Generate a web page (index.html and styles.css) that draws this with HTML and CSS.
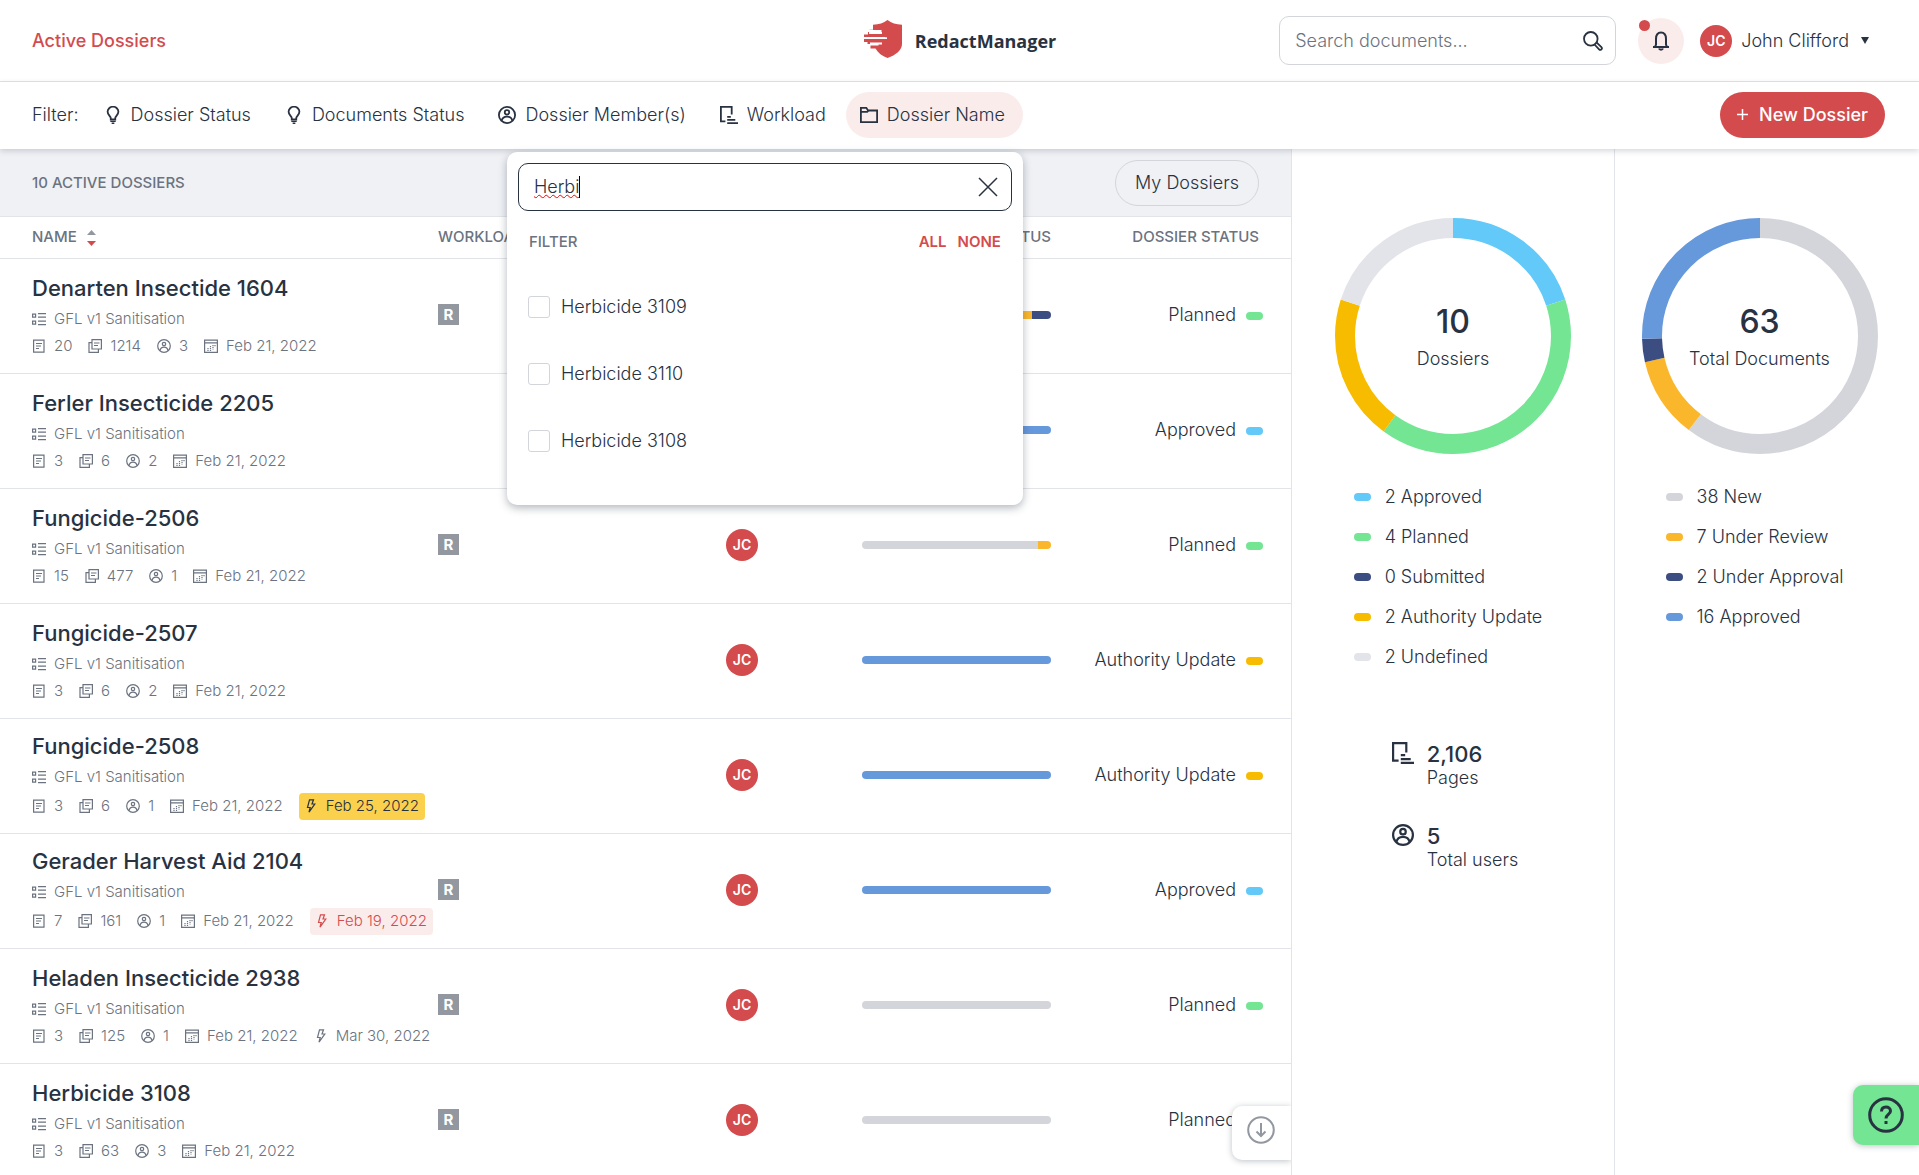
FILE: index.html
```html
<!DOCTYPE html>
<html lang="en">
<head>
    <meta charset="utf-8">
    <meta name="viewport" content="width=device-width, initial-scale=1">
    <title>Active Dossiers - RedactManager</title>
    <link rel="stylesheet" href="styles.css">
</head>
<body>
    <svg class="sprite" aria-hidden="true">
        <symbol id="bulb" viewBox="0 0 20 20" fill="none" stroke="currentColor" stroke-width="2">
            <path d="M7.500 15v-1.600C7.500 11.500 4 10 4 6.500a6 5.700 0 0 1 12 0c0 3.500-3.500 5-3.500 6.900V15z"/>
            <path d="M7 17h6M8.500 19.200h3" stroke-width="1.500"/>
        </symbol>
        <symbol id="user" viewBox="0 0 20 20" fill="none" stroke="currentColor" stroke-width="2">
            <circle cx="10" cy="10" r="9"/>
            <circle cx="10" cy="7" r="2.500"/>
            <path d="M4 16.500c.6-3 3-4.800 6-4.800s5.400 1.800 6 4.800"/>
        </symbol>
        <symbol id="user-small" viewBox="0 0 14 14" fill="none" stroke="currentColor" stroke-width="1.200">
            <circle cx="7" cy="7" r="6.300"/>
            <circle cx="7" cy="5" r="1.700"/>
            <path d="M3 11.600c.4-2.200 2-3.400 4-3.400s3.600 1.200 4 3.400"/>
        </symbol>
        <symbol id="workload" viewBox="0 0 20 20" fill="none" stroke="currentColor" stroke-width="2">
            <path d="M6 17H1V1h12v8.500M8 12h4M8 15.500h9M8 19h12"/>
        </symbol>
        <symbol id="folder" viewBox="0 0 20 20" fill="none" stroke="currentColor" stroke-width="2">
            <path d="M1 18V2h6l2 3h10v13zM1 6.500h7L9.500 5"/>
        </symbol>
        <symbol id="search" viewBox="0 0 20 20" fill="none" stroke="currentColor" stroke-width="1.800">
            <circle cx="7.800" cy="7.800" r="6.800"/>
            <path d="M11.500 13.500l4.600 4.800a1.500 1.500 0 0 0 2.300-2.200l-4.900-4.700"/>
        </symbol>
        <symbol id="bell" viewBox="0 0 18 20" fill="none" stroke="currentColor" stroke-width="2">
            <path d="M1 16h16M3 16l1-2.500V8c0-4 2-6.500 5-6.500S14 4 14 8v5.500l1 2.500M7 17.500c.5 1.500 3.500 1.500 4 0"/>
        </symbol>
        <symbol id="template" viewBox="0 0 14 13" fill="none" stroke="currentColor" stroke-width="1.200">
            <path d="M.6 1.600h3v3h-3zM.6 8.600h3v3h-3zM6 1.100h8M6 4.600h8M6 8.600h8M6 12.100h8"/>
        </symbol>
        <symbol id="doc" viewBox="0 0 14 14" fill="none" stroke="currentColor" stroke-width="1.200">
            <path d="M1.600 1.100h10.400v12H1.600zM4 4.500h6M4 7h5M4 9.500h3"/>
        </symbol>
        <symbol id="pages" viewBox="0 0 14 14" fill="none" stroke="currentColor" stroke-width="1.200">
            <path d="M4 .6h9.400v9.400H4zM4 3.600H1v9.800h9.400V10M6 4h5.500M6 6.500h4"/>
        </symbol>
        <symbol id="calendar" viewBox="0 0 14 14" fill="none" stroke="currentColor" stroke-width="1.200">
            <path d="M.6 1.100h12.800v12.300H.6zM.6 3.800h12.800"/>
            <path d="M4 9v3M6.500 7v5M9 6v4.500M11 6v2" stroke-dasharray="1.200 .8"/>
        </symbol>
        <symbol id="bolt" viewBox="0 0 14 14" fill="none" stroke="currentColor" stroke-width="1.200">
            <path d="M5.500.8h4L8 5h2.800L5 13.200l1.200-4.700H3.500z"/>
        </symbol>
    </svg>

    <header class="top-bar">
        <a class="breadcrumb" href="#">Active Dossiers</a>
        <a class="brand" href="#">
            <svg width="38" height="38" viewBox="0 0 38 38" aria-hidden="true">
                <path fill="#d44b4d" d="M23.500 0c4 3.200 8.500 4.500 14.500 4.700V24c0 6-6 11-14.500 14-5.500-2-9.500-5-12-9.500H6.500v-3h8v-1.500H3.500v-2H0v-3h21v-2H0v-2.500h4V12h13.500v-2H5.500V9.800H9V4.700C15 4.500 19.500 3.200 23.500 0z"/>
                <path stroke="#fff" stroke-width="1.800" d="M5 13h13M2 18.200h21M6 23.500h12"/>
            </svg>
            <span>RedactManager</span>
        </a>
        <div class="top-actions">
            <form class="search" action="#">
                <input type="text" placeholder="Search documents..." aria-label="Search documents">
                <button type="button" aria-label="Search"><svg width="20" height="20"><use href="#search"/></svg></button>
            </form>
            <button class="bell" aria-label="Notifications">
                <svg width="18" height="20"><use href="#bell"/></svg>
                <span class="dot"></span>
            </button>
            <button class="account">
                <span class="avatar">JC</span>
                <span>John Clifford</span>
                <span class="arrow"></span>
            </button>
        </div>
    </header>

    <nav class="filter-bar">
        <span class="filter-title">Filter:</span>
        <div class="filters">
            <button class="filter"><svg width="18" height="18"><use href="#bulb"/></svg>Dossier Status</button>
            <button class="filter"><svg width="18" height="18"><use href="#bulb"/></svg>Documents Status</button>
            <button class="filter"><svg width="18" height="18"><use href="#user"/></svg>Dossier Member(s)</button>
            <button class="filter"><svg width="18" height="18"><use href="#workload"/></svg>Workload</button>
            <div class="filter-menu">
                <button class="filter active"><svg width="18" height="18"><use href="#folder"/></svg>Dossier Name</button>
                <div class="popover">
                    <div class="popover-search">
                        <input type="text" value="Herbi" aria-label="Search dossier names">
                        <span class="text-cursor"></span>
                        <button type="button" aria-label="Clear">
                            <svg width="20" height="20" viewBox="0 0 20 20" stroke="currentColor" stroke-width="1.500"><path d="M1 1l18 18M19 1L1 19"/></svg>
                        </button>
                    </div>
                    <div class="popover-head">
                        <span>FILTER</span>
                        <a href="#">ALL</a>
                        <a href="#">NONE</a>
                    </div>
                    <label class="option"><input type="checkbox">Herbicide 3109</label>
                    <label class="option"><input type="checkbox">Herbicide 3110</label>
                    <label class="option"><input type="checkbox">Herbicide 3108</label>
                </div>
            </div>
        </div>
        <button class="new-dossier"><svg width="11" height="11" viewBox="0 0 11 11" stroke="currentColor" stroke-width="1.500"><path d="M0 5.500h11M5.500 0v11"/></svg>New Dossier</button>
    </nav>

    <div class="content">
        <main class="list">
            <div class="list-head">
                <h1>10 ACTIVE DOSSIERS</h1>
                <button class="my-dossiers">My Dossiers</button>
            </div>
            <table class="dossiers">
                <colgroup>
                    <col>
                    <col class="col-workload">
                    <col class="col-owner">
                    <col class="col-documents">
                    <col class="col-status">
                </colgroup>
                <thead>
                    <tr>
                        <th>NAME <svg class="sort" width="9" height="16" viewBox="0 0 9 16"><path fill="#9398a0" d="M0 5l4.500-5L9 5z"/><path fill="#d44b4d" d="M0 11h9l-4.500 5z"/></svg></th>
                        <th>WORKLOAD</th>
                        <th>OWNER</th>
                        <th class="right">DOCUMENTS STATUS</th>
                        <th class="right">DOSSIER STATUS</th>
                    </tr>
                </thead>
                <tbody>
                    <tr>
                        <td>
                            <h2>Denarten Insectide 1604</h2>
                            <div class="template"><svg><use href="#template"/></svg>GFL v1 Sanitisation</div>
                            <div class="stats">
                                <span><svg><use href="#doc"/></svg>20</span>
                                <span><svg><use href="#pages"/></svg>1214</span>
                                <span><svg><use href="#user-small"/></svg>3</span>
                                <span><svg><use href="#calendar"/></svg>Feb 21, 2022</span>
                            </div>
                        </td>
                        <td><span class="tag">R</span></td>
                        <td><span class="avatar">JC</span></td>
                        <td><div class="bar"><i class="new" style="width: 65%"></i><i class="review" style="width: 25%"></i><i class="navy" style="width: 10%"></i></div></td>
                        <td class="status">Planned<i class="chip planned"></i></td>
                    </tr>
                    <tr>
                        <td>
                            <h2>Ferler Insecticide 2205</h2>
                            <div class="template"><svg><use href="#template"/></svg>GFL v1 Sanitisation</div>
                            <div class="stats">
                                <span><svg><use href="#doc"/></svg>3</span>
                                <span><svg><use href="#pages"/></svg>6</span>
                                <span><svg><use href="#user-small"/></svg>2</span>
                                <span><svg><use href="#calendar"/></svg>Feb 21, 2022</span>
                            </div>
                        </td>
                        <td></td>
                        <td><span class="avatar">JC</span></td>
                        <td><div class="bar"><i class="done" style="width: 100%"></i></div></td>
                        <td class="status">Approved<i class="chip approved"></i></td>
                    </tr>
                    <tr>
                        <td>
                            <h2>Fungicide-2506</h2>
                            <div class="template"><svg><use href="#template"/></svg>GFL v1 Sanitisation</div>
                            <div class="stats">
                                <span><svg><use href="#doc"/></svg>15</span>
                                <span><svg><use href="#pages"/></svg>477</span>
                                <span><svg><use href="#user-small"/></svg>1</span>
                                <span><svg><use href="#calendar"/></svg>Feb 21, 2022</span>
                            </div>
                        </td>
                        <td><span class="tag">R</span></td>
                        <td><span class="avatar">JC</span></td>
                        <td><div class="bar"><i class="new" style="width: 93%"></i><i class="review" style="width: 7%"></i></div></td>
                        <td class="status">Planned<i class="chip planned"></i></td>
                    </tr>
                    <tr>
                        <td>
                            <h2>Fungicide-2507</h2>
                            <div class="template"><svg><use href="#template"/></svg>GFL v1 Sanitisation</div>
                            <div class="stats">
                                <span><svg><use href="#doc"/></svg>3</span>
                                <span><svg><use href="#pages"/></svg>6</span>
                                <span><svg><use href="#user-small"/></svg>2</span>
                                <span><svg><use href="#calendar"/></svg>Feb 21, 2022</span>
                            </div>
                        </td>
                        <td></td>
                        <td><span class="avatar">JC</span></td>
                        <td><div class="bar"><i class="done" style="width: 100%"></i></div></td>
                        <td class="status">Authority Update<i class="chip authority"></i></td>
                    </tr>
                    <tr>
                        <td>
                            <h2>Fungicide-2508</h2>
                            <div class="template"><svg><use href="#template"/></svg>GFL v1 Sanitisation</div>
                            <div class="stats">
                                <span><svg><use href="#doc"/></svg>3</span>
                                <span><svg><use href="#pages"/></svg>6</span>
                                <span><svg><use href="#user-small"/></svg>1</span>
                                <span><svg><use href="#calendar"/></svg>Feb 21, 2022</span>
                                <span class="due warn"><svg><use href="#bolt"/></svg>Feb 25, 2022</span>
                            </div>
                        </td>
                        <td></td>
                        <td><span class="avatar">JC</span></td>
                        <td><div class="bar"><i class="done" style="width: 100%"></i></div></td>
                        <td class="status">Authority Update<i class="chip authority"></i></td>
                    </tr>
                    <tr>
                        <td>
                            <h2>Gerader Harvest Aid 2104</h2>
                            <div class="template"><svg><use href="#template"/></svg>GFL v1 Sanitisation</div>
                            <div class="stats">
                                <span><svg><use href="#doc"/></svg>7</span>
                                <span><svg><use href="#pages"/></svg>161</span>
                                <span><svg><use href="#user-small"/></svg>1</span>
                                <span><svg><use href="#calendar"/></svg>Feb 21, 2022</span>
                                <span class="due over"><svg><use href="#bolt"/></svg>Feb 19, 2022</span>
                            </div>
                        </td>
                        <td><span class="tag">R</span></td>
                        <td><span class="avatar">JC</span></td>
                        <td><div class="bar"><i class="done" style="width: 100%"></i></div></td>
                        <td class="status">Approved<i class="chip approved"></i></td>
                    </tr>
                    <tr>
                        <td>
                            <h2>Heladen Insecticide 2938</h2>
                            <div class="template"><svg><use href="#template"/></svg>GFL v1 Sanitisation</div>
                            <div class="stats">
                                <span><svg><use href="#doc"/></svg>3</span>
                                <span><svg><use href="#pages"/></svg>125</span>
                                <span><svg><use href="#user-small"/></svg>1</span>
                                <span><svg><use href="#calendar"/></svg>Feb 21, 2022</span>
                                <span><svg><use href="#bolt"/></svg>Mar 30, 2022</span>
                            </div>
                        </td>
                        <td><span class="tag">R</span></td>
                        <td><span class="avatar">JC</span></td>
                        <td><div class="bar"><i class="new" style="width: 100%"></i></div></td>
                        <td class="status">Planned<i class="chip planned"></i></td>
                    </tr>
                    <tr>
                        <td>
                            <h2>Herbicide 3108</h2>
                            <div class="template"><svg><use href="#template"/></svg>GFL v1 Sanitisation</div>
                            <div class="stats">
                                <span><svg><use href="#doc"/></svg>3</span>
                                <span><svg><use href="#pages"/></svg>63</span>
                                <span><svg><use href="#user-small"/></svg>3</span>
                                <span><svg><use href="#calendar"/></svg>Feb 21, 2022</span>
                            </div>
                        </td>
                        <td><span class="tag">R</span></td>
                        <td><span class="avatar">JC</span></td>
                        <td><div class="bar"><i class="new" style="width: 100%"></i></div></td>
                        <td class="status">Planned<i class="chip planned"></i></td>
                    </tr>
                </tbody>
            </table>
            <button class="scroll-down" aria-label="Scroll down">
                <svg width="28" height="28" viewBox="0 0 28 28" fill="none" stroke="currentColor" stroke-width="2"><circle cx="14" cy="14" r="12.800"/><path d="M14 7v13M9.500 15.500L14 20l4.500-4.500"/></svg>
            </button>
        </main>

        <aside class="panel">
            <div class="donut">
                <svg viewBox="0 0 236 236" fill="none" stroke-width="20">
                    <g transform="rotate(-90 118 118)">
                        <circle cx="118" cy="118" r="108" pathLength="10" stroke="#62c9f9" stroke-dasharray="2 8"/>
                        <circle cx="118" cy="118" r="108" pathLength="10" stroke="#73e593" stroke-dasharray="4 6" stroke-dashoffset="-2"/>
                        <circle cx="118" cy="118" r="108" pathLength="10" stroke="#f7bc00" stroke-dasharray="2 8" stroke-dashoffset="-6"/>
                        <circle cx="118" cy="118" r="108" pathLength="10" stroke="#e2e4e9" stroke-dasharray="2 8" stroke-dashoffset="-8"/>
                    </g>
                </svg>
                <div class="donut-text"><strong>10</strong><span>Dossiers</span></div>
            </div>
            <ul class="legend">
                <li><i class="chip approved"></i>2 Approved</li>
                <li><i class="chip planned"></i>4 Planned</li>
                <li><i class="chip navy"></i>0 Submitted</li>
                <li><i class="chip authority"></i>2 Authority Update</li>
                <li><i class="chip undefined"></i>2 Undefined</li>
            </ul>
            <div class="totals">
                <div class="total">
                    <svg width="22" height="22"><use href="#workload"/></svg>
                    <div><strong>2,106</strong><span>Pages</span></div>
                </div>
                <div class="total">
                    <svg width="22" height="22"><use href="#user"/></svg>
                    <div><strong>5</strong><span>Total users</span></div>
                </div>
            </div>
        </aside>

        <aside class="panel documents">
            <div class="donut">
                <svg viewBox="0 0 236 236" fill="none" stroke-width="20">
                    <g transform="rotate(-90 118 118)">
                        <circle cx="118" cy="118" r="108" pathLength="63" stroke="#d3d5da" stroke-dasharray="38 25"/>
                        <circle cx="118" cy="118" r="108" pathLength="63" stroke="#fbb72c" stroke-dasharray="7 56" stroke-dashoffset="-38"/>
                        <circle cx="118" cy="118" r="108" pathLength="63" stroke="#3c4d82" stroke-dasharray="2 61" stroke-dashoffset="-45"/>
                        <circle cx="118" cy="118" r="108" pathLength="63" stroke="#6698dc" stroke-dasharray="16 47" stroke-dashoffset="-47"/>
                    </g>
                </svg>
                <div class="donut-text"><strong>63</strong><span>Total Documents</span></div>
            </div>
            <ul class="legend">
                <li><i class="chip new"></i>38 New</li>
                <li><i class="chip review"></i>7 Under Review</li>
                <li><i class="chip navy"></i>2 Under Approval</li>
                <li><i class="chip done"></i>16 Approved</li>
            </ul>
        </aside>
    </div>

    <button class="help" aria-label="Help">
        <svg width="36" height="36" viewBox="0 0 36 36" fill="none" stroke="currentColor" stroke-width="3"><circle cx="18" cy="18" r="16.300"/><path d="M13.500 14.500c0-3 2-4.500 4.500-4.500s4.500 1.500 4.500 4c0 3.500-4.500 3.500-4.500 7.500M18 24v3"/></svg>
    </button>
</body>
</html>
```
FILE: styles.css
```css
* {
    box-sizing: border-box;
}

body {
    font-family: "Inter", "Liberation Sans", sans-serif;
    font-size: 18px;
    font-weight: 300;
    line-height: 24px;
    color: #283241;
    background-color: #FFF;
    margin: 0;
    height: 100vh;
    display: flex;
    flex-direction: column;
    overflow: hidden;
}

h1, h2, ul {
    margin: 0;
    padding: 0;
}

a {
    color: #d44b4d;
    text-decoration: none;
}

button, input {
    font: inherit;
    color: inherit;
}

button {
    display: flex;
    align-items: center;
    justify-content: center;
    padding: 0;
    border: none;
    background: none;
    cursor: pointer;
    flex: none;
}

strong {
    font-weight: 500;
}

.sprite {
    display: none;
}

/* header */
.top-bar {
    display: grid;
    grid-template-columns: 1fr auto 1fr;
    align-items: center;
    height: 82px;
    flex: none;
    padding: 0 50px 0 32px;
    border-bottom: 1px solid #e2e4e9;
}

.breadcrumb {
    font-weight: 500;
}

.brand {
    display: flex;
    align-items: center;
    gap: 13px;
    margin-left: 19px;
    font-family: "Open Sans", sans-serif;
    font-weight: 700;
    color: #283241;
}

.brand svg {
    margin-bottom: 4px;
}

.top-actions {
    display: flex;
    align-items: center;
    justify-content: flex-end;
}

.search {
    display: flex;
    align-items: center;
    width: 337px;
    height: 49px;
    margin-right: 22px;
    padding-right: 12px;
    border: 1px solid #d3d5da;
    border-radius: 10px;
}

.search input {
    flex: 1;
    min-width: 0;
    padding: 0 0 0 15px;
    border: none;
    outline: none;
    background: none;
}

.search input::placeholder {
    color: #6b7380;
    opacity: 1;
}

.bell {
    position: relative;
    width: 46px;
    height: 46px;
    margin-right: 16px;
    border-radius: 50%;
    background: #fbecec;
}

.dot {
    position: absolute;
    top: 2px;
    left: 1px;
    width: 11px;
    height: 11px;
    border-radius: 50%;
    background: #d44b4d;
}

.account {
    gap: 9px;
}

.avatar {
    display: flex;
    align-items: center;
    justify-content: center;
    width: 32px;
    height: 32px;
    border-radius: 50%;
    background: #d44b4d;
    color: #FFF;
    font-size: 14px;
    font-weight: 600;
}

.arrow {
    margin-left: 3px;
    border: 4px solid transparent;
    border-top: 7px solid #283241;
    border-bottom: none;
}

/* filters */
.filter-bar {
    position: relative;
    z-index: 2;
    display: flex;
    align-items: center;
    height: 67px;
    flex: none;
    padding: 0 34px 2px 32px;
    background: #FFF;
    box-shadow: 0 2px 6px rgba(40, 50, 65, .2);
}

.filters {
    display: flex;
    gap: 2px;
    margin-left: 11px;
    flex: 1;
}

.filter {
    gap: 9px;
    height: 46px;
    padding: 0 18px 0 14px;
    border-radius: 23px;
}

.filter.active {
    background: #fbecec;
}

.filter-menu {
    position: relative;
}

.popover {
    position: absolute;
    top: 60px;
    right: 0;
    width: 516px;
    padding: 11px 11px 30px;
    border-radius: 10px;
    background: #FFF;
    box-shadow: 0 3px 8px rgba(40, 50, 65, .35);
}

.popover-search {
    position: relative;
    display: flex;
    align-items: center;
    height: 48px;
    padding-right: 13px;
    border: 1px solid #283241;
    border-radius: 10px;
}

.popover-search input {
    flex: 1;
    min-width: 0;
    padding: 0 0 0 15px;
    border: none;
    outline: none;
    text-decoration: underline wavy #f00 1px;
}

.text-cursor {
    position: absolute;
    top: 12px;
    left: 60px;
    width: 1px;
    height: 22px;
    background: #000;
}

.popover-head {
    display: flex;
    gap: 11px;
    padding: 19px 11px 20px;
    font-size: 15px;
    font-weight: 500;
    color: #6b7380;
}

.popover-head span {
    flex: 1;
}

.popover-head a {
    font-weight: 600;
}

.option {
    display: flex;
    align-items: center;
    gap: 11px;
    height: 67px;
    padding-left: 10px;
}

.option input {
    appearance: none;
    width: 22px;
    height: 22px;
    margin: 0;
    border: 1px solid #d3d5da;
    border-radius: 3px;
}

.new-dossier {
    gap: 11px;
    height: 46px;
    padding: 0 17px;
    border-radius: 23px;
    background: #d44b4d;
    color: #FFF;
    font-weight: 500;
}

/* dossier list */
.content {
    display: flex;
    flex: 1;
    min-height: 0;
}

.list {
    position: relative;
    flex: 1;
    min-width: 0;
    overflow: hidden;
}

.list-head {
    display: flex;
    align-items: center;
    justify-content: space-between;
    height: 68px;
    padding: 0 32px;
    background: #eff1f5;
    border-bottom: 1px solid #e2e4e9;
}

.list-head h1 {
    font-size: 15px;
    font-weight: 500;
    color: #6b7380;
}

.my-dossiers {
    height: 46px;
    padding: 0 19px;
    border: 1px solid #d3d5da;
    border-radius: 23px;
}

.dossiers {
    width: 100%;
    table-layout: fixed;
    border-collapse: collapse;
}

.col-workload {
    width: 288px;
}

.col-owner {
    width: 136px;
}

.col-documents {
    width: 189px;
}

.col-status {
    width: 240px;
}

th, td {
    padding: 0;
    text-align: left;
    border-bottom: 1px solid #e2e4e9;
}

th {
    height: 41px;
    font-size: 15px;
    font-weight: 500;
    color: #6b7380;
    white-space: nowrap;
}

th.right {
    text-align: right;
}

th:first-child, td:first-child {
    padding-left: 32px;
}

th:last-child {
    padding-right: 32px;
}

.sort {
    margin-left: 6px;
    vertical-align: middle;
}

td {
    height: 115px;
    padding-bottom: 2px;
}

h2 {
    font-size: 22px;
    font-weight: 500;
    line-height: 32px;
}

.template, .stats {
    display: flex;
    align-items: center;
    font-size: 15px;
    line-height: 22px;
    color: #6b7380;
    white-space: nowrap;
}

.template {
    gap: 8px;
    margin: 4px 0 5px;
}

.stats {
    gap: 16px;
}

.stats span {
    display: flex;
    align-items: center;
    gap: 8px;
}

.template svg, .stats svg {
    width: 14px;
    height: 14px;
}

.stats .due {
    height: 27px;
    padding: 0 6px 0 5px;
    border-radius: 4px;
}

.stats .warn {
    background: #fbd04c;
    color: #283241;
}

.stats .over {
    background: #fbecec;
    color: #d44b4d;
}

.tag {
    display: block;
    width: 21px;
    height: 21px;
    background: #9398a0;
    color: #FFF;
    font-size: 15px;
    font-weight: 700;
    line-height: 21px;
    text-align: center;
}

.bar {
    display: flex;
    height: 8px;
    border-radius: 4px;
    overflow: hidden;
}

.status {
    padding-right: 28px;
    text-align: right;
}

.chip {
    display: inline-block;
    width: 17px;
    height: 8px;
    border-radius: 4px;
}

.status .chip {
    margin-left: 10px;
    vertical-align: middle;
}

.approved {
    background: #62c9f9;
}

.planned {
    background: #73e593;
}

.authority {
    background: #f7bc00;
}

.undefined {
    background: #e2e4e9;
}

.new {
    background: #d3d5da;
}

.review {
    background: #fbb72c;
}

.navy {
    background: #3c4d82;
}

.done {
    background: #6698dc;
}

.scroll-down {
    position: absolute;
    right: 0;
    bottom: 15px;
    width: 59px;
    height: 54px;
    padding: 0 2px 6px 0;
    border-radius: 10px 0 0 10px;
    background: #FFF;
    color: #9398a0;
    box-shadow: 0 1px 6px rgba(40, 50, 65, .3);
}

/* charts */
.panel {
    display: flex;
    flex-direction: column;
    align-items: center;
    width: 323px;
    flex: none;
    padding-top: 69px;
    border-left: 1px solid #e2e4e9;
}

.panel.documents {
    width: 305px;
    padding-right: 15px;
}

.donut {
    position: relative;
    width: 236px;
    height: 236px;
}

.donut-text {
    position: absolute;
    inset: 0;
    display: flex;
    flex-direction: column;
    align-items: center;
    justify-content: center;
    gap: 5px;
}

.donut-text strong {
    font-size: 32px;
    line-height: 40px;
}

.legend {
    list-style: none;
    margin-top: 32px;
    padding-right: 10px;
}

.legend li {
    display: flex;
    align-items: center;
    gap: 14px;
    height: 22px;
    margin-bottom: 18px;
}

.totals {
    display: flex;
    flex-direction: column;
    gap: 34px;
    margin-top: 56px;
    padding-left: 4px;
}

.total {
    display: flex;
    gap: 13px;
}

.total strong, .total span {
    display: block;
}

.total strong {
    font-size: 22px;
}

.help {
    position: fixed;
    right: 0;
    bottom: 30px;
    width: 66px;
    height: 60px;
    border-radius: 10px 0 0 10px;
    background: #73e593;
    box-shadow: 0 1px 6px rgba(40, 50, 65, .3);
}
```
